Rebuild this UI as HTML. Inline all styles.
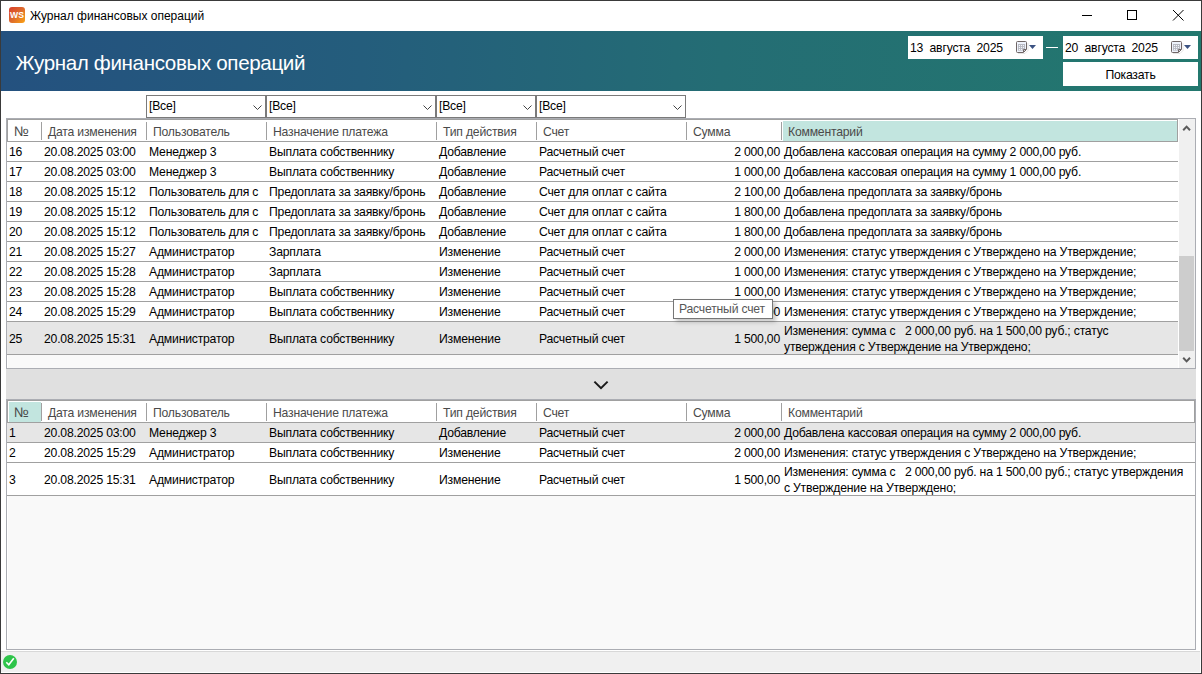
<!DOCTYPE html><html><head><meta charset="utf-8"><style>
html,body{margin:0;padding:0;width:1202px;height:674px;overflow:hidden;background:#fff}
body{position:relative;font-family:"Liberation Sans",sans-serif;}
div{position:absolute;box-sizing:border-box;letter-spacing:-0.2px}
.gb{border:1px solid #a0a0a0;border-top:2px solid #a7a7a7;background:#fff}
.ln{height:1px;background:#a0a0a0}
.hs{width:1px;height:18px;background:#a0a0a0}
.ht{font-size:12.2px;color:#4a4a4a;line-height:22px;white-space:pre}
.ct{font-size:12.2px;color:#000;line-height:20px;white-space:pre}
.cb{border:1px solid #7a7a7a;background:#fff;height:23px}
.cbt{font-size:12.2px;color:#000;line-height:20px;left:2px;top:0px;white-space:pre}
.chev{position:absolute}
</style></head><body>

<div style="left:0;top:0;width:1202px;height:674px;border:1px solid #3a3a3a;background:#fff;z-index:0"></div>
<div style="left:9px;top:7px;width:16px;height:16px;border-radius:3px;background:linear-gradient(135deg,#d83e2b 0%,#dd6a2c 50%,#fba313 100%);"></div>
<svg style="position:absolute;left:9px;top:7px" width="16" height="16" viewBox="0 0 16 16"><text x="8" y="10.7" text-anchor="middle" font-family="Liberation Sans" font-weight="bold" font-size="8.2" fill="#fff" letter-spacing="0" transform="translate(8 0) scale(1.05 1) translate(-8 0)">WS</text></svg>
<div style="left:30px;top:6px;font-size:12px;letter-spacing:0;line-height:20px;color:#000;white-space:pre">Журнал финансовых операций</div>
<div style="left:1082px;top:15px;width:10px;height:1px;background:#000"></div>
<div style="left:1127px;top:10px;width:10px;height:10px;border:1px solid #000"></div>
<svg style="position:absolute;left:1172px;top:9px" width="13" height="13" viewBox="0 0 13 13"><path d="M1 1L11.5 11.5M11.5 1L1 11.5" stroke="#000" stroke-width="1" fill="none"/></svg>
<div style="left:1px;top:31px;width:1200px;height:60px;background:linear-gradient(90deg,#24517f 0%,#245d7c 30%,#246d74 60%,#23786e 100%)"></div>
<div style="left:15.5px;top:50px;font-size:20.6px;line-height:26px;color:#fff;white-space:pre;letter-spacing:-0.36px">Журнал финансовых операций</div>
<div style="left:908px;top:36px;width:135px;height:23px;background:#fff"></div>
<div style="left:910px;top:38px;font-size:12.2px;line-height:20px;color:#000;white-space:pre">13 &nbsp;августа &nbsp;2025</div>
<svg style="position:absolute;left:1015px;top:40px" width="22" height="14" viewBox="0 0 22 14"><path d="M3 13.5H10L13 10.5V3" stroke="#000" stroke-opacity="0.10" stroke-width="1" fill="none"/><path d="M2.5 1.5H10.5A1 1 0 0 1 11.5 2.5V9.5L8.5 12.5H2.5A1 1 0 0 1 1.5 11.5V2.5A1 1 0 0 1 2.5 1.5Z" fill="#eef2fb" stroke="#6f6666" stroke-width="1"/><rect x="3" y="4" width="7" height="6.6" fill="#b7b9c2"/><g fill="#f4f6fb"><rect x="3.9" y="5" width="1.1" height="1.1"/><rect x="5.9" y="5" width="1.1" height="1.1"/><rect x="7.9" y="5" width="1.1" height="1.1"/><rect x="3.9" y="7" width="1.1" height="1.1"/><rect x="5.9" y="7" width="1.1" height="1.1"/><rect x="7.9" y="7" width="1.1" height="1.1"/><rect x="3.9" y="9" width="1.1" height="1.1"/><rect x="5.9" y="9" width="1.1" height="1.1"/><rect x="7.9" y="9" width="1.1" height="1.1"/></g><path d="M8.5 12V9.5H11" stroke="#6f6666" stroke-width="1" fill="none"/><path d="M14 5h7l-3.5 4z" fill="#3b5282"/></svg>
<div style="left:1063px;top:36px;width:135px;height:23px;background:#fff"></div>
<div style="left:1065px;top:38px;font-size:12.2px;line-height:20px;color:#000;white-space:pre">20 &nbsp;августа &nbsp;2025</div>
<svg style="position:absolute;left:1170px;top:40px" width="22" height="14" viewBox="0 0 22 14"><path d="M3 13.5H10L13 10.5V3" stroke="#000" stroke-opacity="0.10" stroke-width="1" fill="none"/><path d="M2.5 1.5H10.5A1 1 0 0 1 11.5 2.5V9.5L8.5 12.5H2.5A1 1 0 0 1 1.5 11.5V2.5A1 1 0 0 1 2.5 1.5Z" fill="#eef2fb" stroke="#6f6666" stroke-width="1"/><rect x="3" y="4" width="7" height="6.6" fill="#b7b9c2"/><g fill="#f4f6fb"><rect x="3.9" y="5" width="1.1" height="1.1"/><rect x="5.9" y="5" width="1.1" height="1.1"/><rect x="7.9" y="5" width="1.1" height="1.1"/><rect x="3.9" y="7" width="1.1" height="1.1"/><rect x="5.9" y="7" width="1.1" height="1.1"/><rect x="7.9" y="7" width="1.1" height="1.1"/><rect x="3.9" y="9" width="1.1" height="1.1"/><rect x="5.9" y="9" width="1.1" height="1.1"/><rect x="7.9" y="9" width="1.1" height="1.1"/></g><path d="M8.5 12V9.5H11" stroke="#6f6666" stroke-width="1" fill="none"/><path d="M14 5h7l-3.5 4z" fill="#3b5282"/></svg>
<div style="left:1046px;top:47px;width:12px;height:1px;background:#fff"></div>
<div style="left:1063px;top:62px;width:135px;height:24px;background:#fff"></div>
<div style="left:1063px;top:65px;width:135px;text-align:center;font-size:12.2px;line-height:20px;color:#000">Показать</div>
<div class="cb" style="left:146px;top:95px;width:120px"><div class="cbt">[Все]</div><svg style="position:absolute;left:106px;top:9px" width="10" height="6" viewBox="0 0 10 6"><path d="M0.5 0.5L4.5 4.5L8.5 0.5" stroke="#444" stroke-width="1" fill="none"/></svg></div>
<div class="cb" style="left:266px;top:95px;width:170px"><div class="cbt">[Все]</div><svg style="position:absolute;left:156px;top:9px" width="10" height="6" viewBox="0 0 10 6"><path d="M0.5 0.5L4.5 4.5L8.5 0.5" stroke="#444" stroke-width="1" fill="none"/></svg></div>
<div class="cb" style="left:436px;top:95px;width:100px"><div class="cbt">[Все]</div><svg style="position:absolute;left:86px;top:9px" width="10" height="6" viewBox="0 0 10 6"><path d="M0.5 0.5L4.5 4.5L8.5 0.5" stroke="#444" stroke-width="1" fill="none"/></svg></div>
<div class="cb" style="left:536px;top:95px;width:150px"><div class="cbt">[Все]</div><svg style="position:absolute;left:136px;top:9px" width="10" height="6" viewBox="0 0 10 6"><path d="M0.5 0.5L4.5 4.5L8.5 0.5" stroke="#444" stroke-width="1" fill="none"/></svg></div>
<div style="left:6px;top:118px;width:1190px;height:251px;border:1px solid #abadb3;background:#f9f9f9"></div>
<div style="left:7px;top:119px;width:1px;height:249px;background:#fff"></div>
<div style="left:7px;top:119px;width:1171px;height:23px;background:#fff;border:1px solid #a0a0a0"></div>
<div class="ht" style="left:14px;top:121px"><span style="font-size:14px;letter-spacing:0;position:relative;top:-1px">№</span></div>
<div class="ht" style="left:48px;top:121px">Дата изменения</div>
<div class="hs" style="left:41px;top:122px"></div>
<div class="ht" style="left:153px;top:121px">Пользователь</div>
<div class="hs" style="left:146px;top:122px"></div>
<div class="ht" style="left:273px;top:121px">Назначение платежа</div>
<div class="hs" style="left:266px;top:122px"></div>
<div class="ht" style="left:443px;top:121px">Тип действия</div>
<div class="hs" style="left:436px;top:122px"></div>
<div class="ht" style="left:543px;top:121px">Счет</div>
<div class="hs" style="left:536px;top:122px"></div>
<div class="ht" style="left:693px;top:121px">Сумма</div>
<div class="hs" style="left:686px;top:122px"></div>
<div style="left:783px;top:121px;width:394px;height:20px;background:#c2e5df"></div>
<div class="ht" style="left:788px;top:121px">Комментарий</div>
<div class="hs" style="left:781px;top:122px"></div>
<div style="left:7px;top:142px;width:1171px;height:19px;background:#fff"></div>
<div class="ln" style="left:7px;top:161px;width:1171px"></div>
<div class="ct" style="left:9px;top:142px">16</div>
<div class="ct" style="left:44px;top:142px">20.08.2025 03:00</div>
<div class="ct" style="left:149px;top:142px">Менеджер 3</div>
<div class="ct" style="left:269px;top:142px">Выплата собственнику</div>
<div class="ct" style="left:439px;top:142px">Добавление</div>
<div class="ct" style="left:539px;top:142px">Расчетный счет</div>
<div class="ct" style="left:686px;width:94px;top:142px;text-align:right">2 000,00</div>
<div class="ct" style="left:784px;top:142px">Добавлена кассовая операция на сумму 2 000,00 руб.</div>
<div style="left:7px;top:162px;width:1171px;height:19px;background:#fff"></div>
<div class="ln" style="left:7px;top:181px;width:1171px"></div>
<div class="ct" style="left:9px;top:162px">17</div>
<div class="ct" style="left:44px;top:162px">20.08.2025 03:00</div>
<div class="ct" style="left:149px;top:162px">Менеджер 3</div>
<div class="ct" style="left:269px;top:162px">Выплата собственнику</div>
<div class="ct" style="left:439px;top:162px">Добавление</div>
<div class="ct" style="left:539px;top:162px">Расчетный счет</div>
<div class="ct" style="left:686px;width:94px;top:162px;text-align:right">1 000,00</div>
<div class="ct" style="left:784px;top:162px">Добавлена кассовая операция на сумму 1 000,00 руб.</div>
<div style="left:7px;top:182px;width:1171px;height:19px;background:#fff"></div>
<div class="ln" style="left:7px;top:201px;width:1171px"></div>
<div class="ct" style="left:9px;top:182px">18</div>
<div class="ct" style="left:44px;top:182px">20.08.2025 15:12</div>
<div class="ct" style="left:149px;top:182px">Пользователь для с</div>
<div class="ct" style="left:269px;top:182px">Предоплата за заявку/бронь</div>
<div class="ct" style="left:439px;top:182px">Добавление</div>
<div class="ct" style="left:539px;top:182px">Счет для оплат с сайта</div>
<div class="ct" style="left:686px;width:94px;top:182px;text-align:right">2 100,00</div>
<div class="ct" style="left:784px;top:182px">Добавлена предоплата за заявку/бронь</div>
<div style="left:7px;top:202px;width:1171px;height:19px;background:#fff"></div>
<div class="ln" style="left:7px;top:221px;width:1171px"></div>
<div class="ct" style="left:9px;top:202px">19</div>
<div class="ct" style="left:44px;top:202px">20.08.2025 15:12</div>
<div class="ct" style="left:149px;top:202px">Пользователь для с</div>
<div class="ct" style="left:269px;top:202px">Предоплата за заявку/бронь</div>
<div class="ct" style="left:439px;top:202px">Добавление</div>
<div class="ct" style="left:539px;top:202px">Счет для оплат с сайта</div>
<div class="ct" style="left:686px;width:94px;top:202px;text-align:right">1 800,00</div>
<div class="ct" style="left:784px;top:202px">Добавлена предоплата за заявку/бронь</div>
<div style="left:7px;top:222px;width:1171px;height:19px;background:#fff"></div>
<div class="ln" style="left:7px;top:241px;width:1171px"></div>
<div class="ct" style="left:9px;top:222px">20</div>
<div class="ct" style="left:44px;top:222px">20.08.2025 15:12</div>
<div class="ct" style="left:149px;top:222px">Пользователь для с</div>
<div class="ct" style="left:269px;top:222px">Предоплата за заявку/бронь</div>
<div class="ct" style="left:439px;top:222px">Добавление</div>
<div class="ct" style="left:539px;top:222px">Счет для оплат с сайта</div>
<div class="ct" style="left:686px;width:94px;top:222px;text-align:right">1 800,00</div>
<div class="ct" style="left:784px;top:222px">Добавлена предоплата за заявку/бронь</div>
<div style="left:7px;top:242px;width:1171px;height:19px;background:#fff"></div>
<div class="ln" style="left:7px;top:261px;width:1171px"></div>
<div class="ct" style="left:9px;top:242px">21</div>
<div class="ct" style="left:44px;top:242px">20.08.2025 15:27</div>
<div class="ct" style="left:149px;top:242px">Администратор</div>
<div class="ct" style="left:269px;top:242px">Зарплата</div>
<div class="ct" style="left:439px;top:242px">Изменение</div>
<div class="ct" style="left:539px;top:242px">Расчетный счет</div>
<div class="ct" style="left:686px;width:94px;top:242px;text-align:right">2 000,00</div>
<div class="ct" style="left:784px;top:242px">Изменения: статус утверждения с Утверждено на Утверждение;</div>
<div style="left:7px;top:262px;width:1171px;height:19px;background:#fff"></div>
<div class="ln" style="left:7px;top:281px;width:1171px"></div>
<div class="ct" style="left:9px;top:262px">22</div>
<div class="ct" style="left:44px;top:262px">20.08.2025 15:28</div>
<div class="ct" style="left:149px;top:262px">Администратор</div>
<div class="ct" style="left:269px;top:262px">Зарплата</div>
<div class="ct" style="left:439px;top:262px">Изменение</div>
<div class="ct" style="left:539px;top:262px">Расчетный счет</div>
<div class="ct" style="left:686px;width:94px;top:262px;text-align:right">1 000,00</div>
<div class="ct" style="left:784px;top:262px">Изменения: статус утверждения с Утверждено на Утверждение;</div>
<div style="left:7px;top:282px;width:1171px;height:19px;background:#fff"></div>
<div class="ln" style="left:7px;top:301px;width:1171px"></div>
<div class="ct" style="left:9px;top:282px">23</div>
<div class="ct" style="left:44px;top:282px">20.08.2025 15:28</div>
<div class="ct" style="left:149px;top:282px">Администратор</div>
<div class="ct" style="left:269px;top:282px">Выплата собственнику</div>
<div class="ct" style="left:439px;top:282px">Изменение</div>
<div class="ct" style="left:539px;top:282px">Расчетный счет</div>
<div class="ct" style="left:686px;width:94px;top:282px;text-align:right">1 000,00</div>
<div class="ct" style="left:784px;top:282px">Изменения: статус утверждения с Утверждено на Утверждение;</div>
<div style="left:7px;top:302px;width:1171px;height:19px;background:#fff"></div>
<div class="ln" style="left:7px;top:321px;width:1171px"></div>
<div class="ct" style="left:9px;top:302px">24</div>
<div class="ct" style="left:44px;top:302px">20.08.2025 15:29</div>
<div class="ct" style="left:149px;top:302px">Администратор</div>
<div class="ct" style="left:269px;top:302px">Выплата собственнику</div>
<div class="ct" style="left:439px;top:302px">Изменение</div>
<div class="ct" style="left:539px;top:302px">Расчетный счет</div>
<div class="ct" style="left:686px;width:94px;top:302px;text-align:right">1 000,00</div>
<div class="ct" style="left:784px;top:302px">Изменения: статус утверждения с Утверждено на Утверждение;</div>
<div style="left:7px;top:322px;width:1171px;height:32px;background:#e6e6e6"></div>
<div class="ln" style="left:7px;top:354px;width:1171px"></div>
<div class="ct" style="left:9px;top:329px">25</div>
<div class="ct" style="left:44px;top:329px">20.08.2025 15:31</div>
<div class="ct" style="left:149px;top:329px">Администратор</div>
<div class="ct" style="left:269px;top:329px">Выплата собственнику</div>
<div class="ct" style="left:439px;top:329px">Изменение</div>
<div class="ct" style="left:539px;top:329px">Расчетный счет</div>
<div class="ct" style="left:686px;width:94px;top:329px;text-align:right">1 500,00</div>
<div class="ct" style="left:784px;top:323px;line-height:16px">Изменения: сумма с &nbsp; 2 000,00 руб. на 1 500,00 руб.; статус<br>утверждения с Утверждение на Утверждено;</div>
<div style="left:1178px;top:119px;width:1px;height:249px;background:#fff"></div>
<div style="left:1179px;top:119px;width:16px;height:249px;background:#f0f0f0"></div>
<div style="left:1179px;top:256px;width:15px;height:95px;background:#cdcdcd"></div>
<svg style="position:absolute;left:1182px;top:124px" width="10" height="8" viewBox="0 0 10 8"><path d="M1.2 6.2L4.6 2.6L8 6.2" stroke="#5a5a5a" stroke-width="2" fill="none"/></svg>
<svg style="position:absolute;left:1182px;top:356px" width="10" height="8" viewBox="0 0 10 8"><path d="M1.2 1.8L4.6 5.4L8 1.8" stroke="#5a5a5a" stroke-width="2" fill="none"/></svg>
<div style="left:6px;top:369px;width:1190px;height:30px;background:#e0e0e0"></div>
<svg style="position:absolute;left:593px;top:380px" width="16" height="11" viewBox="0 0 16 11"><path d="M1.4 1.6L8 8.2L14.6 1.6" stroke="#1a1a1a" stroke-width="2" fill="none"/></svg>
<div style="left:6px;top:399px;width:1190px;height:251px;border:1px solid #abadb3;background:#f9f9f9"></div>
<div style="left:7px;top:400px;width:1px;height:249px;background:#fff"></div>
<div style="left:7px;top:400px;width:1188px;height:23px;background:#fff;border:1px solid #a0a0a0"></div>
<div style="left:9px;top:402px;width:32px;height:20px;background:#c2e5df"></div>
<div class="ht" style="left:14px;top:402px"><span style="font-size:14px;letter-spacing:0;position:relative;top:-1px">№</span></div>
<div class="ht" style="left:48px;top:402px">Дата изменения</div>
<div class="hs" style="left:41px;top:403px"></div>
<div class="ht" style="left:153px;top:402px">Пользователь</div>
<div class="hs" style="left:146px;top:403px"></div>
<div class="ht" style="left:273px;top:402px">Назначение платежа</div>
<div class="hs" style="left:266px;top:403px"></div>
<div class="ht" style="left:443px;top:402px">Тип действия</div>
<div class="hs" style="left:436px;top:403px"></div>
<div class="ht" style="left:543px;top:402px">Счет</div>
<div class="hs" style="left:536px;top:403px"></div>
<div class="ht" style="left:693px;top:402px">Сумма</div>
<div class="hs" style="left:686px;top:403px"></div>
<div class="ht" style="left:788px;top:402px">Комментарий</div>
<div class="hs" style="left:781px;top:403px"></div>
<div style="left:7px;top:423px;width:1188px;height:19px;background:#e6e6e6"></div>
<div class="ln" style="left:7px;top:442px;width:1188px"></div>
<div class="ct" style="left:9px;top:423px">1</div>
<div class="ct" style="left:44px;top:423px">20.08.2025 03:00</div>
<div class="ct" style="left:149px;top:423px">Менеджер 3</div>
<div class="ct" style="left:269px;top:423px">Выплата собственнику</div>
<div class="ct" style="left:439px;top:423px">Добавление</div>
<div class="ct" style="left:539px;top:423px">Расчетный счет</div>
<div class="ct" style="left:686px;width:94px;top:423px;text-align:right">2 000,00</div>
<div class="ct" style="left:784px;top:423px">Добавлена кассовая операция на сумму 2 000,00 руб.</div>
<div style="left:7px;top:443px;width:1188px;height:19px;background:#fff"></div>
<div class="ln" style="left:7px;top:462px;width:1188px"></div>
<div class="ct" style="left:9px;top:443px">2</div>
<div class="ct" style="left:44px;top:443px">20.08.2025 15:29</div>
<div class="ct" style="left:149px;top:443px">Администратор</div>
<div class="ct" style="left:269px;top:443px">Выплата собственнику</div>
<div class="ct" style="left:439px;top:443px">Изменение</div>
<div class="ct" style="left:539px;top:443px">Расчетный счет</div>
<div class="ct" style="left:686px;width:94px;top:443px;text-align:right">2 000,00</div>
<div class="ct" style="left:784px;top:443px">Изменения: статус утверждения с Утверждено на Утверждение;</div>
<div style="left:7px;top:463px;width:1188px;height:32px;background:#fff"></div>
<div class="ln" style="left:7px;top:495px;width:1188px"></div>
<div class="ct" style="left:9px;top:470px">3</div>
<div class="ct" style="left:44px;top:470px">20.08.2025 15:31</div>
<div class="ct" style="left:149px;top:470px">Администратор</div>
<div class="ct" style="left:269px;top:470px">Выплата собственнику</div>
<div class="ct" style="left:439px;top:470px">Изменение</div>
<div class="ct" style="left:539px;top:470px">Расчетный счет</div>
<div class="ct" style="left:686px;width:94px;top:470px;text-align:right">1 500,00</div>
<div class="ct" style="left:784px;top:464px;line-height:16px">Изменения: сумма с &nbsp; 2 000,00 руб. на 1 500,00 руб.; статус утверждения<br>с Утверждение на Утверждено;</div>
<div style="left:1px;top:651px;width:1199px;height:1px;background:#d8d8d8"></div>
<div style="left:1px;top:652px;width:1199px;height:20px;background:#f0f0f0"></div>
<svg style="position:absolute;left:3px;top:655px" width="15" height="15" viewBox="0 0 15 15"><circle cx="7" cy="7" r="7" fill="#2ec44a"/><path d="M3.3 7.2L5.8 9.8L10.8 3.2" stroke="#fff" stroke-width="1.6" fill="none"/></svg>
<div style="left:676px;top:302px;width:100px;height:20px;background:rgba(0,0,0,0.22);filter:blur(2px)"></div>
<div style="left:673px;top:299px;width:100px;height:20px;border:1px solid #767676;background:#fff"></div>
<div style="left:679px;top:299px;font-size:12.2px;line-height:20px;color:#575757;white-space:pre">Расчетный счет</div>
</body></html>
